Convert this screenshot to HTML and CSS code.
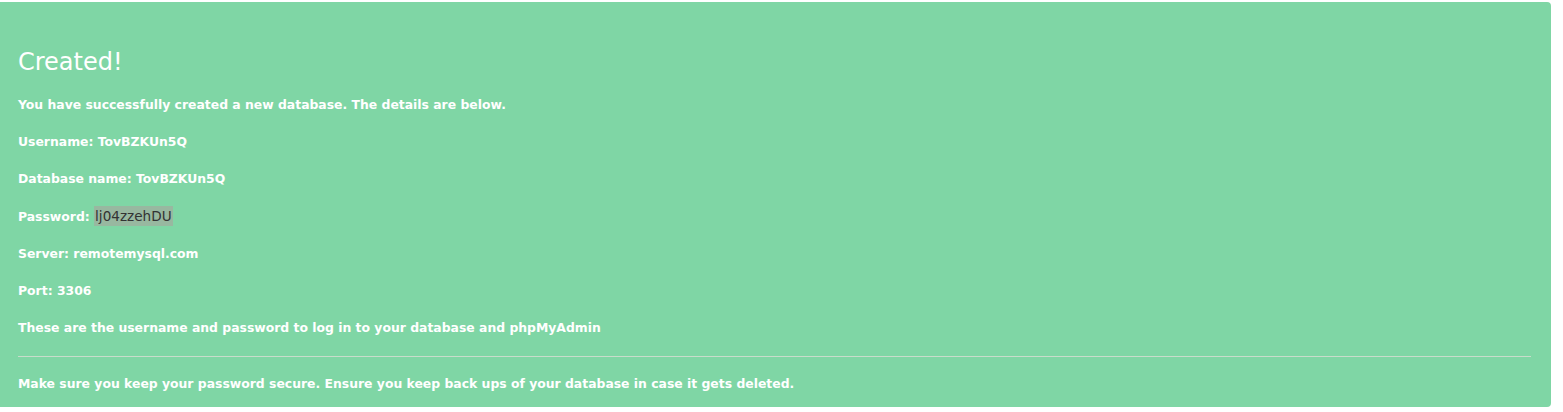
FILE: index.html
```html
<!DOCTYPE html>
<html>
<head>
<meta charset="utf-8">
<link rel="stylesheet" href="styles.css">
</head>
<body>
<div class="page">
  <div class="alert">
    <h3 class="title">Created!</h3>
    <p>You have successfully created a new database. The details are below.</p>
    <p>Username: TovBZKUn5Q</p>
    <p>Database name: TovBZKUn5Q</p>
    <p>Password: <span class="secret">lj04zzehDU</span></p>
    <p>Server: remotemysql.com</p>
    <p>Port: 3306</p>
    <p>These are the username and password to log in to your database and phpMyAdmin</p>
    <hr class="rule">
    <p>Make sure you keep your password secure. Ensure you keep back ups of your database in case it gets deleted.</p>
  </div>
</div>
</body>
</html>
```

FILE: styles.css
```css
html, body {
  margin: 0;
  padding: 0;
  background: #ffffff;
}
.page {
  padding-top: 2px;
}
.alert {
  margin-left: -4px;
  width: 1555px;
  height: 405px;
  box-sizing: border-box;
  background: #7fd6a5;
  border-radius: 4px;
  padding: 44px 22px 0 22px;
  color: #ffffff;
  font-family: "DejaVu Sans", sans-serif;
  font-weight: bold;
  font-size: 12.4px;
}
.title {
  margin: 0 0 18px 0;
  font-size: 24px;
  font-weight: 500;
  line-height: 32px;
}
.alert p {
  margin: 0 0 19px 0;
  line-height: 18px;
}
.secret {
  background: #98b8a0;
  color: #333333;
  font-weight: normal;
  font-size: 13.6px;
  padding: 2px 1px;
}
.rule {
  border: 0;
  border-top: 1px solid #c8dccb;
  margin: 0 0 18px 0;
  width: 1513px;
}
```
